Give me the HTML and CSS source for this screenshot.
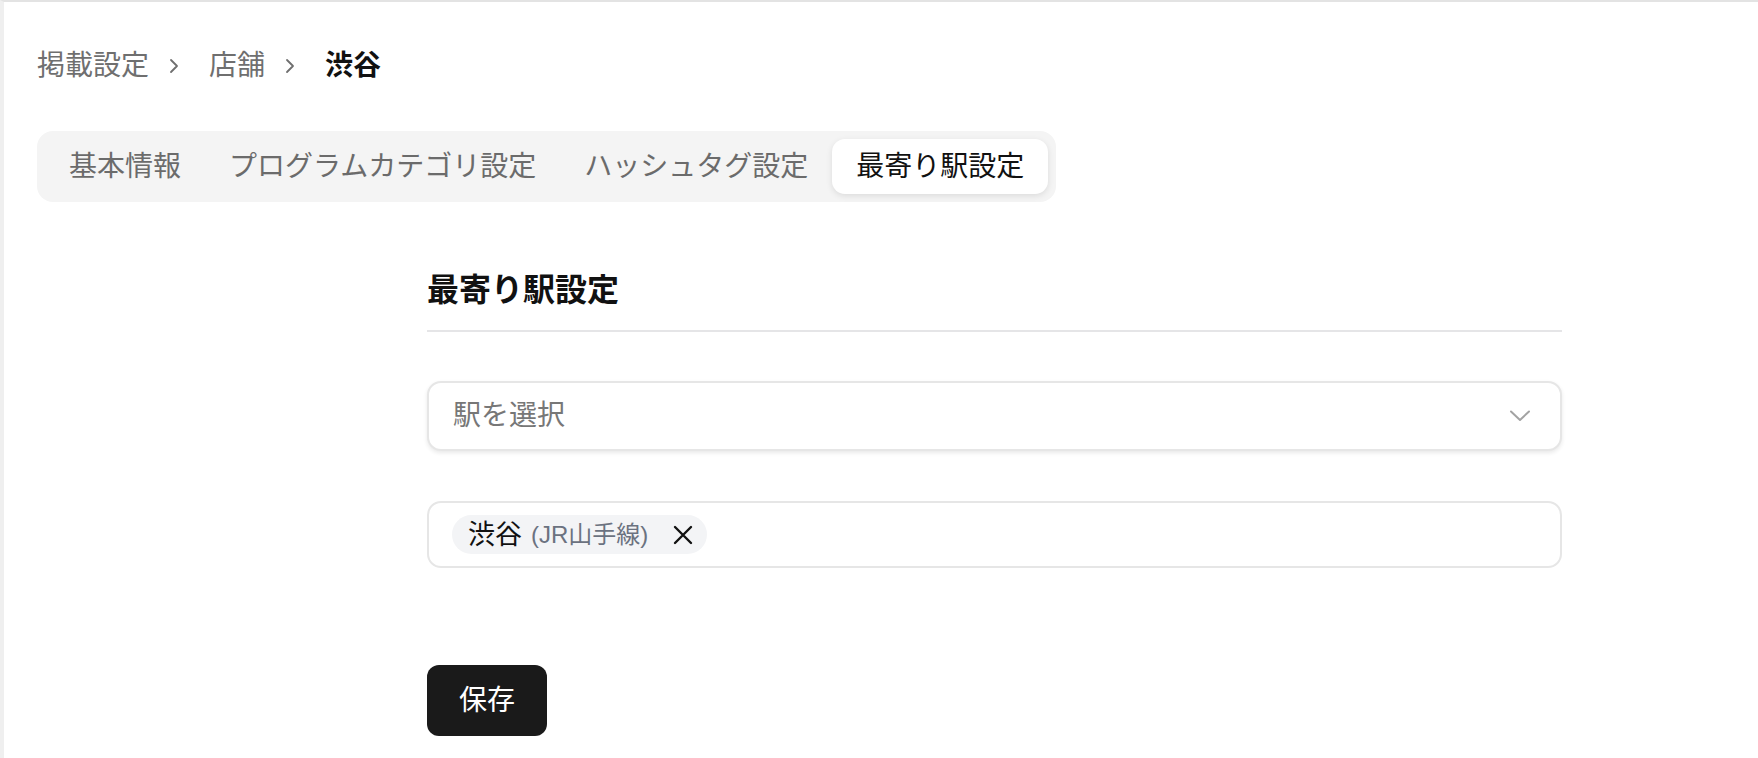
FILE: index.html
```html
<!DOCTYPE html>
<html lang="ja">
<head>
<meta charset="utf-8">
<title>最寄り駅設定</title>
<link rel="stylesheet" href="styles.css">
</head>
<body>
<div class="frame">
  <nav class="breadcrumb">
    <span class="crumb">掲載設定</span>
    <svg class="crumb-sep" width="10" height="16" viewBox="0 0 10 16"><path d="M2 2 L8 8 L2 14" fill="none" stroke="#6f6f6f" stroke-width="1.8" stroke-linecap="round" stroke-linejoin="round"/></svg>
    <span class="crumb">店舗</span>
    <svg class="crumb-sep" width="10" height="16" viewBox="0 0 10 16"><path d="M2 2 L8 8 L2 14" fill="none" stroke="#6f6f6f" stroke-width="1.8" stroke-linecap="round" stroke-linejoin="round"/></svg>
    <span class="crumb current">渋谷</span>
  </nav>

  <div class="tabs">
    <div class="tab">基本情報</div>
    <div class="tab">プログラムカテゴリ設定</div>
    <div class="tab">ハッシュタグ設定</div>
    <div class="tab active">最寄り駅設定</div>
  </div>

  <section class="section">
    <h2 class="section-title">最寄り駅設定</h2>

    <div class="select">
      <span class="placeholder">駅を選択</span>
      <svg class="select-arrow" width="22" height="14" viewBox="0 0 22 14"><path d="M2 2.5 L11 11 L20 2.5" fill="none" stroke="#a3a3a3" stroke-width="2" stroke-linecap="round" stroke-linejoin="round"/></svg>
    </div>

    <div class="chips">
      <span class="chip">
        <span class="chip-name">渋谷</span>
        <span class="chip-line">(JR山手線)</span>
        <svg class="chip-x" width="22" height="22" viewBox="0 0 22 22"><path d="M3 3 L19 19 M19 3 L3 19" fill="none" stroke="#111" stroke-width="2.4" stroke-linecap="round"/></svg>
      </span>
    </div>

    <button class="save">保存</button>
  </section>
</div>
</body>
</html>
```

FILE: styles.css
```css
* { box-sizing: border-box; }

html, body {
  margin: 0;
  padding: 0;
  background: #ffffff;
}

body {
  font-family: "Liberation Sans", "Noto Sans CJK JP", sans-serif;
  color: #111111;
  border-left: 4px solid #efefef;
  border-top: 2px solid #e3e3e3;
  min-height: 758px;
}

.frame {
  padding: 0 33px;
}

.breadcrumb {
  display: flex;
  align-items: center;
  margin-top: 44px;
  height: 40px;
  font-size: 28px;
  line-height: 40px;
}

.crumb {
  color: #6f6f6f;
}

.crumb.current {
  color: #111111;
  font-weight: 700;
}

.crumb-sep {
  margin: 0 30px 0 20px;
}

.tabs {
  display: inline-flex;
  margin-top: 45px;
  padding: 8px;
  background: #f4f4f4;
  border-radius: 16px;
}

.tab {
  height: 55px;
  display: flex;
  align-items: center;
  padding: 0 24px;
  font-size: 28px;
  line-height: 40px;
  color: #6b6b6b;
  border-radius: 13px;
}

.tab.active {
  background: #ffffff;
  color: #111111;
  box-shadow: 0 2px 6px rgba(0, 0, 0, 0.10);
}

.section {
  margin-left: 390px;
  width: 1135px;
  padding-top: 66px;
}

.section-title {
  margin: 0;
  font-size: 32px;
  line-height: 44px;
  font-weight: 700;
  padding-bottom: 18px;
  border-bottom: 2px solid #e5e5e7;
}

.select {
  margin-top: 49px;
  height: 70px;
  display: flex;
  align-items: center;
  justify-content: space-between;
  padding: 0 29px 0 24px;
  border: 2px solid #e6e6e6;
  border-radius: 14px;
  background: #ffffff;
  box-shadow: 0 2px 4px rgba(0, 0, 0, 0.09);
}

.placeholder {
  font-size: 28px;
  line-height: 40px;
  color: #777777;
}

.chips {
  margin-top: 50px;
  display: flex;
  align-items: center;
  padding: 12px 23px;
  border: 2px solid #e6e6e6;
  border-radius: 14px;
  min-height: 67px;
}

.chip {
  display: inline-flex;
  align-items: center;
  height: 39px;
  padding: 0 13px 0 16px;
  background: #f3f4f6;
  border-radius: 20px;
}

.chip-name {
  font-size: 27px;
  line-height: 36px;
  color: #111111;
}

.chip-line {
  margin-left: 9px;
  font-size: 24px;
  line-height: 36px;
  color: #6b7280;
}

.chip-x {
  margin-left: 24px;
}

.save {
  display: block;
  margin-top: 97px;
  height: 71px;
  padding: 0 32px;
  border: none;
  border-radius: 12px;
  background: #1a1a1a;
  color: #ffffff;
  font-family: "Liberation Sans", "Noto Sans CJK JP", sans-serif;
  font-size: 28px;
  line-height: 40px;
}
```
